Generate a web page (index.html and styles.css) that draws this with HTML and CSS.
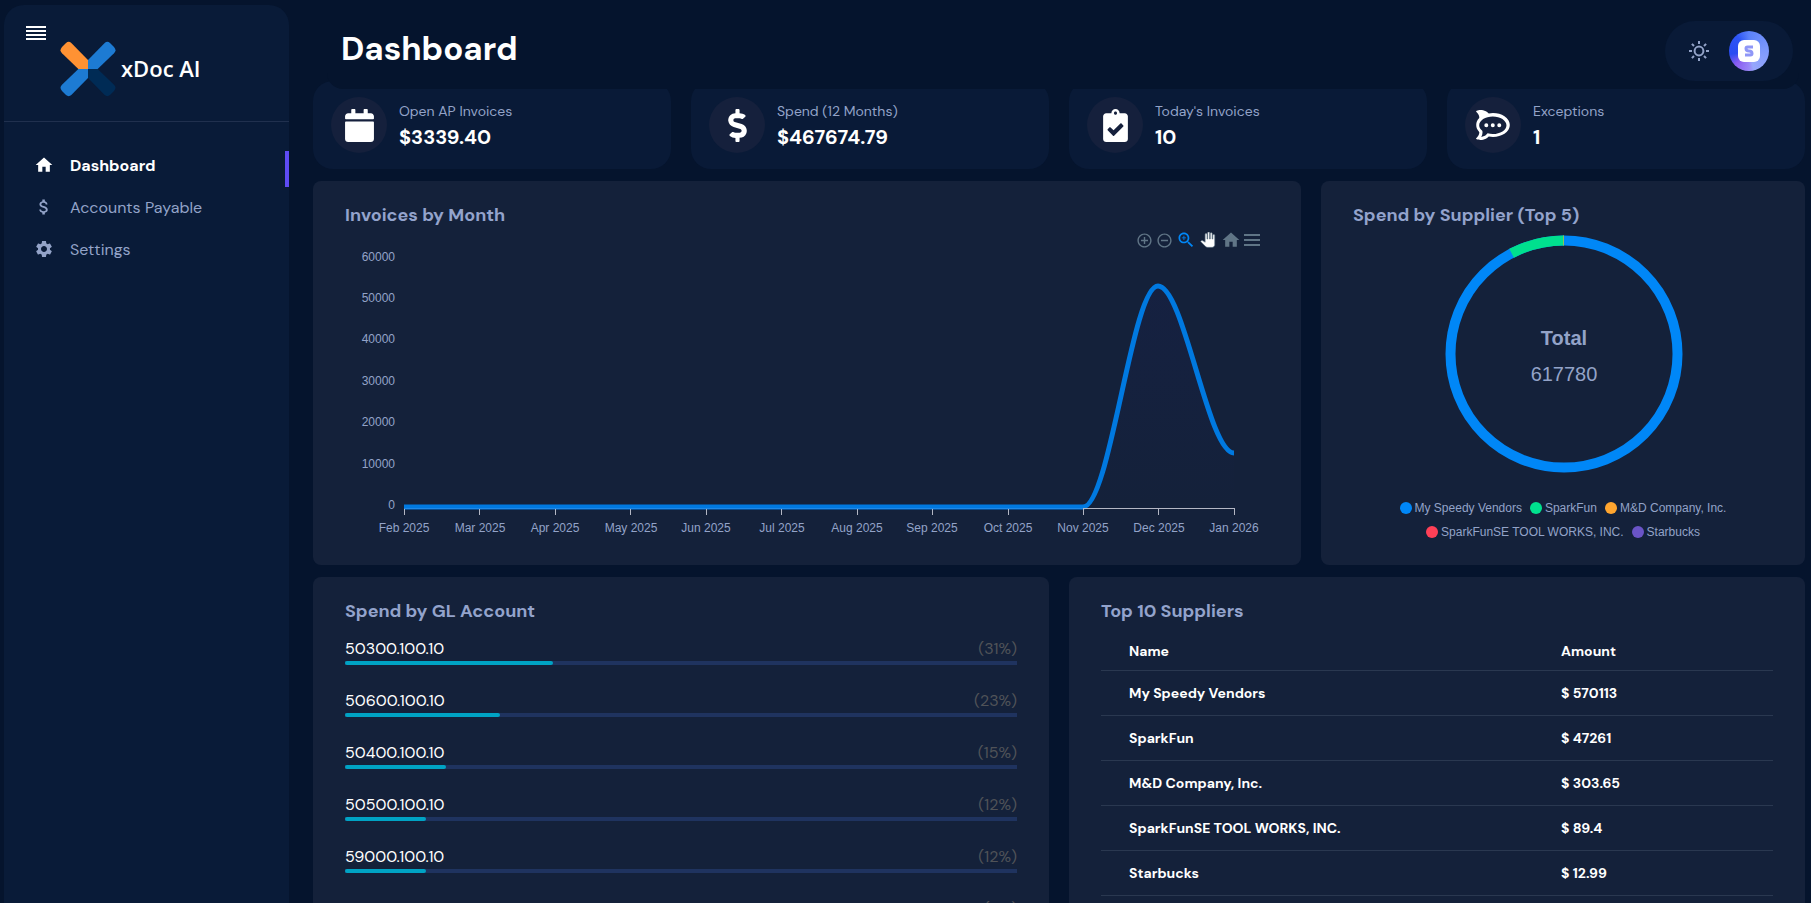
FILE: index.html
```html
<!DOCTYPE html>
<html lang="en">
<head>
  <meta charset="UTF-8">
  <meta name="viewport" content="width=device-width, initial-scale=1">
  <title>xDoc AI - Dashboard</title>
  <link rel="stylesheet" href="styles.css">
</head>
<body>
  <div class="app">

    <aside class="sidebar">
      <div class="brand">
        <button type="button" class="menu-toggle" aria-label="Toggle menu">
          <span></span><span></span><span></span><span></span>
        </button>
        <a href="#" class="logo">
          <svg width="56" height="56" viewBox="181 122 168 168" aria-hidden="true">
            <path fill="#ff9233" d="M187 140 199 128Q207 121 215 128L265 179V206H236L187 159Q178 150 187 140Z"/>
            <path fill="#1d7bd3" d="M343 140 331 128Q323 121 315 128L265 179V206H294L343 159Q352 150 343 140Z"/>
            <path fill="#1d7bd3" d="M187 272 199 284Q207 291 215 284L265 233V206H236L187 253Q178 262 187 272Z"/>
            <path fill="#002b55" d="M343 272 331 284Q323 291 315 284L265 233V206H294L343 253Q352 262 343 272Z"/>
          </svg>
          <span>xDoc AI</span>
        </a>
      </div>
      <nav class="nav">
        <a href="#" class="nav-link active">
          <svg width="20" height="20" viewBox="0 0 24 24"><path d="M10 20v-6h4v6h5v-8h3L12 3 2 12h3v8z"/></svg>
          Dashboard
        </a>
        <a href="#" class="nav-link">
          <svg width="20" height="20" viewBox="0 0 24 24"><path d="M11.8 10.9c-2.27-.59-3-1.2-3-2.15 0-1.09 1.01-1.85 2.7-1.85 1.78 0 2.44.85 2.5 2.1h2.21c-.07-1.72-1.12-3.3-3.21-3.81V3h-3v2.16c-1.94.42-3.5 1.68-3.5 3.61 0 2.31 1.91 3.46 4.7 4.13 2.5.6 3 1.48 3 2.41 0 .69-.49 1.79-2.7 1.79-2.06 0-2.87-.92-2.98-2.1h-2.2c.12 2.19 1.76 3.42 3.68 3.83V21h3v-2.15c1.95-.37 3.5-1.5 3.5-3.55 0-2.84-2.43-3.81-4.7-4.4z"/></svg>
          Accounts Payable
        </a>
        <a href="#" class="nav-link">
          <svg width="20" height="20" viewBox="0 0 24 24"><path d="M19.14 12.94c.04-.3.06-.61.06-.94 0-.32-.02-.64-.07-.94l2.03-1.58c.18-.14.23-.41.12-.61l-1.92-3.32c-.12-.22-.37-.29-.59-.22l-2.39.96c-.5-.38-1.03-.7-1.62-.94l-.36-2.54c-.04-.24-.24-.41-.48-.41h-3.84c-.24 0-.43.17-.47.41l-.36 2.54c-.59.24-1.13.57-1.62.94l-2.39-.96c-.22-.08-.47 0-.59.22L2.74 8.87c-.12.21-.08.47.12.61l2.03 1.58c-.05.3-.09.63-.09.94s.02.64.07.94l-2.03 1.58c-.18.14-.23.41-.12.61l1.92 3.32c.12.22.37.29.59.22l2.39-.96c.5.38 1.03.7 1.62.94l.36 2.54c.05.24.24.41.48.41h3.84c.24 0 .44-.17.47-.41l.36-2.54c.59-.24 1.13-.56 1.62-.94l2.39.96c.22.08.47 0 .59-.22l1.92-3.32c.12-.22.07-.47-.12-.61l-2.01-1.58zM12 15.6c-1.98 0-3.6-1.62-3.6-3.6s1.62-3.6 3.6-3.6 3.6 1.62 3.6 3.6-1.62 3.6-3.6 3.6z"/></svg>
          Settings
        </a>
      </nav>
    </aside>

    <main class="main">
      <header class="topbar">
        <h1>Dashboard</h1>
        <div class="topbar-actions">
          <button type="button" class="icon-btn" aria-label="Switch theme">
            <svg width="20" height="20" viewBox="0 0 20 20">
              <circle cx="10" cy="10" r="4.4"/>
              <path d="M10 0v3M10 17v3M0 10h3M17 10h3M2.9 2.9l2.1 2.1M15 15l2.1 2.1M2.9 17.1 5 15M15 5l2.1-2.1"/>
            </svg>
          </button>
          <button type="button" class="avatar" aria-label="Account">
            <svg width="22" height="22" viewBox="0 0 22 22">
              <rect width="22" height="22" rx="6" fill="#fff"/>
              <path fill="none" d="M15 7H9.500Q8 7 8 8.500 8 11 11 11T14 13.500Q14 15 12.500 15H7" stroke="#8f97f7" stroke-width="3"/>
            </svg>
          </button>
        </div>
      </header>

      <section class="stats">
        <div class="stat">
          <div class="stat-icon">
            <svg width="29" height="33" viewBox="0 0 448 512"><path d="M12 192h424c6.600 0 12 5.400 12 12v260c0 26.500-21.500 48-48 48H48c-26.500 0-48-21.500-48-48V204c0-6.600 5.400-12 12-12zm436-44v-36c0-26.500-21.500-48-48-48h-48V12c0-6.600-5.400-12-12-12h-40c-6.600 0-12 5.400-12 12v52H160V12c0-6.600-5.400-12-12-12h-40c-6.600 0-12 5.400-12 12v52H48C21.500 64 0 85.500 0 112v36c0 6.600 5.400 12 12 12h424c6.600 0 12-5.400 12-12z"/></svg>
          </div>
          <div>
            <div class="stat-label">Open AP Invoices</div>
            <div class="stat-value">$3339.40</div>
          </div>
        </div>
        <div class="stat">
          <div class="stat-icon">
            <svg width="19" height="33" viewBox="0 0 288 512"><path d="M209.200 233.400l-108-31.600C88.700 198.200 80 186.500 80 173.500c0-16.300 13.200-29.500 29.500-29.500h66.300c12.200 0 24.200 3.700 34.200 10.500 6.100 4.100 14.300 3.100 19.500-2l34.800-34c7.100-6.900 6.100-18.400-1.800-24.500C238 74.800 207.400 64.100 176 64V16c0-8.800-7.200-16-16-16h-32c-8.800 0-16 7.200-16 16v48h-2.500C45.800 64-5.400 118.700.5 183.600c4.200 46.100 39.400 83.600 83.800 96.600l102.500 30c12.500 3.700 21.200 15.300 21.200 28.300 0 16.300-13.200 29.500-29.500 29.500h-66.300C100 368 88 364.300 78 357.500c-6.100-4.100-14.300-3.100-19.500 2l-34.800 34c-7.100 6.900-6.100 18.400 1.800 24.500 24.500 19.200 55.100 29.900 86.500 30v48c0 8.800 7.200 16 16 16h32c8.800 0 16-7.200 16-16v-48.200c46.600-.9 90.300-28.600 105.700-72.700 21.500-61.600-14.600-124.800-72.500-141.700z"/></svg>
          </div>
          <div>
            <div class="stat-label">Spend (12 Months)</div>
            <div class="stat-value">$467674.79</div>
          </div>
        </div>
        <div class="stat">
          <div class="stat-icon">
            <svg width="25" height="33" viewBox="0 0 384 512"><path d="M336 64h-80c0-35.300-28.700-64-64-64s-64 28.700-64 64H48C21.500 64 0 85.500 0 112v352c0 26.500 21.500 48 48 48h288c26.500 0 48-21.500 48-48V112c0-26.500-21.500-48-48-48zM192 40c13.300 0 24 10.700 24 24s-10.700 24-24 24-24-10.700-24-24 10.700-24 24-24zm121.200 231.800l-143 141.800c-4.700 4.700-12.300 4.600-17-.1l-82.600-83.300c-4.700-4.700-4.600-12.300.1-17L99.100 285c4.700-4.700 12.300-4.600 17 .1l46 46.400 106-105.200c4.700-4.700 12.300-4.600 17 .1l28.200 28.400c4.700 4.800 4.600 12.300-.1 17z"/></svg>
          </div>
          <div>
            <div class="stat-label">Today's Invoices</div>
            <div class="stat-value">10</div>
          </div>
        </div>
        <div class="stat">
          <div class="stat-icon">
            <svg width="34" height="30" viewBox="0 0 576 512"><path d="M284.046,224.8a34.114,34.114,0,1,0,34.317,34.113A34.217,34.217,0,0,0,284.046,224.8Zm-110.45,0a34.114,34.114,0,1,0,34.317,34.113A34.217,34.217,0,0,0,173.6,224.8Zm220.923,0a34.114,34.114,0,1,0,34.317,34.113A34.215,34.215,0,0,0,394.519,224.8Zm153.807-55.319c-15.535-24.172-37.31-45.57-64.681-63.618-52.886-34.817-122.374-54-195.666-54a405.975,405.975,0,0,0-72.032,6.357,238.524,238.524,0,0,0-49.51-36.588C99.684-11.7,40.859.711,11.135,11.421A14.291,14.291,0,0,0,5.58,34.782C26.542,56.458,61.222,99.3,52.7,138.252c-33.142,33.9-51.112,74.776-51.112,117.337,0,43.372,17.97,84.248,51.112,118.148,8.526,38.956-26.154,81.816-47.116,103.491a14.284,14.284,0,0,0,5.555,23.34c29.724,10.709,88.549,23.147,155.324-10.2a238.679,238.679,0,0,0,49.51-36.589A405.972,405.972,0,0,0,288,460.14c73.313,0,142.8-19.159,195.667-53.975,27.371-18.049,49.145-39.426,64.679-63.619,17.309-26.923,26.07-55.916,26.07-86.125C574.394,225.4,565.634,196.43,548.326,169.485ZM284.987,409.9a345.65,345.65,0,0,1-89.446-11.5l-20.129,19.393a184.366,184.366,0,0,1-37.138,27.585,145.767,145.767,0,0,1-52.522,14.87c.983-1.771,1.881-3.563,2.842-5.356q30.258-55.68,16.325-100.078c-32.992-25.962-52.778-59.2-52.778-95.4,0-83.1,104.254-150.469,232.846-150.469s232.867,67.373,232.867,150.469C517.854,342.525,413.6,409.9,284.987,409.9Z"/></svg>
          </div>
          <div>
            <div class="stat-label">Exceptions</div>
            <div class="stat-value">1</div>
          </div>
        </div>
      </section>

      <section class="charts">
        <div class="card card-wide">
          <h2>Invoices by Month</h2>
          <div class="toolbar">
            <button type="button" aria-label="Zoom in"><svg width="17" height="17" viewBox="0 0 24 24"><path d="M13 7h-2v4H7v2h4v4h2v-4h4v-2h-4V7zm-1-5C6.480 2 2 6.480 2 12s4.480 10 10 10 10-4.480 10-10S17.520 2 12 2zm0 18c-4.410 0-8-3.590-8-8s3.590-8 8-8 8 3.590 8 8-3.590 8-8 8z"/></svg></button>
            <button type="button" aria-label="Zoom out"><svg width="17" height="17" viewBox="0 0 24 24"><path d="M7 11v2h10v-2H7zm5-9C6.480 2 2 6.480 2 12s4.480 10 10 10 10-4.480 10-10S17.520 2 12 2zm0 18c-4.410 0-8-3.590-8-8s3.590-8 8-8 8 3.590 8 8-3.590 8-8 8z"/></svg></button>
            <button type="button" class="selected" aria-label="Selection zoom"><svg width="20" height="20" viewBox="0 0 24 24"><path d="M15.500 14h-.79l-.28-.27C15.410 12.590 16 11.110 16 9.500 16 5.910 13.090 3 9.500 3S3 5.910 3 9.500 5.910 16 9.500 16c1.610 0 3.090-.59 4.230-1.570l.27.28v.79l5 4.990L20.490 19l-4.990-5zm-6 0C7.010 14 5 11.990 5 9.500S7.010 5 9.500 5 14 7.010 14 9.500 11.990 14 9.500 14z"/><path d="M12 10h-2v2H9v-2H7V9h2V7h1v2h2v1z"/></svg></button>
            <button type="button" class="pan" aria-label="Panning"><svg width="16" height="16" viewBox="0 0 25 25"><path d="M23 5.500V20c0 2.200-1.800 4-4 4h-7.300c-1.080 0-2.100-.43-2.850-1.190L1 14.830s1.260-1.230 1.300-1.250c.22-.19.49-.29.79-.29.22 0 .42.06.6.16.04.01 4.310 2.460 4.310 2.460V4c0-.83.67-1.500 1.500-1.500S11 3.170 11 4v7h1V1.500c0-.83.67-1.500 1.500-1.500S15 .67 15 1.500V11h1V2.500c0-.83.67-1.500 1.500-1.500s1.500.67 1.500 1.500V11h1V5.500c0-.83.67-1.500 1.500-1.500s1.500.67 1.500 1.500z"/></svg></button>
            <button type="button" aria-label="Reset zoom"><svg width="20" height="20" viewBox="0 0 24 24"><path d="M10 20v-6h4v6h5v-8h3L12 3 2 12h3v8z"/></svg></button>
            <button type="button" aria-label="Chart menu"><svg width="16" height="12" viewBox="0 0 16 12"><path d="M0 0h16v2H0zM0 5h16v2H0zM0 10h16v2H0z"/></svg></button>
          </div>
          <svg class="line-chart" viewBox="0 0 924 292" role="img" aria-label="Invoices by month">
            <defs>
              <linearGradient id="area" x1="0" y1="0" x2="0" y2="1">
                <stop offset="0" stop-color="#2a1fa0" stop-opacity=".07"/>
                <stop offset="1" stop-color="#2a1fa0" stop-opacity="0"/>
              </linearGradient>
            </defs>
            <g class="axis-text" text-anchor="end">
              <text x="50" y="12">60000</text>
              <text x="50" y="53">50000</text>
              <text x="50" y="94">40000</text>
              <text x="50" y="136">30000</text>
              <text x="50" y="177">20000</text>
              <text x="50" y="219">10000</text>
              <text x="50" y="260">0</text>
            </g>
            <path fill="url(#area)" d="M738 258C765 258 787 37 813 37S863 204 889 204V258Z"/>
            <path fill="none" stroke="#0079e0" stroke-width="5" d="M59 258H738C765 258 787 37 813 37S863 204 889 204"/>
            <path class="axis-line" d="M59 259.500H889M59.500 259v7M134.500 259v7M210.500 259v7M285.500 259v7M361.500 259v7M436.500 259v7M512.500 259v7M587.500 259v7M663.500 259v7M738.500 259v7M813.500 259v7M889.500 259v7"/>
            <path stroke="#1f88e8" d="M59 259.500H738"/>
            <g class="axis-text" text-anchor="middle">
              <text x="59" y="283">Feb 2025</text>
              <text x="135" y="283">Mar 2025</text>
              <text x="210" y="283">Apr 2025</text>
              <text x="286" y="283">May 2025</text>
              <text x="361" y="283">Jun 2025</text>
              <text x="437" y="283">Jul 2025</text>
              <text x="512" y="283">Aug 2025</text>
              <text x="587" y="283">Sep 2025</text>
              <text x="663" y="283">Oct 2025</text>
              <text x="738" y="283">Nov 2025</text>
              <text x="814" y="283">Dec 2025</text>
              <text x="889" y="283">Jan 2026</text>
            </g>
          </svg>
        </div>

        <div class="card">
          <h2>Spend by Supplier (Top 5)</h2>
          <svg class="donut" viewBox="0 0 420 271" role="img" aria-label="Spend by supplier">
            <g fill="none" stroke-width="10">
              <circle cx="211" cy="129" r="113.500" stroke="#0087f7"/>
              <path stroke="#00e08e" d="M158.600 28.300A113.500 113.500 0 0 1 211 15.500"/>
              <path stroke="#8fc05a" stroke-width="1" d="M210.500 10.500V20.500"/>
            </g>
            <text class="donut-title" x="211" y="120">Total</text>
            <text class="donut-value" x="211" y="156">617780</text>
          </svg>
          <ul class="legend">
            <li><span class="dot blue"></span>My Speedy Vendors</li>
            <li><span class="dot green"></span>SparkFun</li>
            <li><span class="dot orange"></span>M&amp;D Company, Inc.</li>
            <li><span class="dot red"></span>SparkFunSE TOOL WORKS, INC.</li>
            <li><span class="dot purple"></span>Starbucks</li>
          </ul>
        </div>
      </section>

      <section class="details">
        <div class="card">
          <h2>Spend by GL Account</h2>
          <ul class="accounts">
            <li>
              <div class="account-row"><span>50300.100.10</span><span class="percent">(31%)</span></div>
              <div class="bar"><div class="bar-fill" style="width: 31%"></div></div>
            </li>
            <li>
              <div class="account-row"><span>50600.100.10</span><span class="percent">(23%)</span></div>
              <div class="bar"><div class="bar-fill" style="width: 23%"></div></div>
            </li>
            <li>
              <div class="account-row"><span>50400.100.10</span><span class="percent">(15%)</span></div>
              <div class="bar"><div class="bar-fill" style="width: 15%"></div></div>
            </li>
            <li>
              <div class="account-row"><span>50500.100.10</span><span class="percent">(12%)</span></div>
              <div class="bar"><div class="bar-fill" style="width: 12%"></div></div>
            </li>
            <li>
              <div class="account-row"><span>59000.100.10</span><span class="percent">(12%)</span></div>
              <div class="bar"><div class="bar-fill" style="width: 12%"></div></div>
            </li>
            <li>
              <div class="account-row"><span>50200.100.10</span><span class="percent">(7%)</span></div>
              <div class="bar"><div class="bar-fill" style="width: 7%"></div></div>
            </li>
          </ul>
        </div>

        <div class="card">
          <h2>Top 10 Suppliers</h2>
          <table class="suppliers">
            <thead>
              <tr><th>Name</th><th>Amount</th></tr>
            </thead>
            <tbody>
              <tr><td>My Speedy Vendors</td><td>$ 570113</td></tr>
              <tr><td>SparkFun</td><td>$ 47261</td></tr>
              <tr><td>M&amp;D Company, Inc.</td><td>$ 303.65</td></tr>
              <tr><td>SparkFunSE TOOL WORKS, INC.</td><td>$ 89.4</td></tr>
              <tr><td>Starbucks</td><td>$ 12.99</td></tr>
            </tbody>
          </table>
        </div>
      </section>
    </main>

  </div>
</body>
</html>
```
FILE: styles.css
```css
* { box-sizing: border-box; }

body {
  margin: 0;
  background: #05142d;
  color: #fff;
  font-family: "DM Sans", Inter, sans-serif;
  font-size: 16px;
}

h1, h2, ul { margin: 0; padding: 0; }
ul { list-style: none; }
a { color: inherit; text-decoration: none; }
svg { display: block; fill: currentColor; }
button { padding: 0; border: 0; background: none; color: inherit; cursor: pointer; }

.app {
  display: flex;
  align-items: flex-start;
  gap: 24px;
  padding: 0 6px 0 4px;
}

/* sidebar */
.sidebar {
  position: sticky;
  top: 5px;
  flex: 0 0 285px;
  height: calc(100vh - 5px);
  margin-top: 5px;
  background: #091b38;
  border-radius: 20px 20px 0 0;
}
.brand {
  display: flex;
  align-items: flex-start;
  gap: 14px;
  height: 117px;
  padding: 21px 22px;
  border-bottom: 1px solid #20304e;
}
.menu-toggle {
  display: flex;
  flex-direction: column;
  gap: 2px;
  width: 20px;
}
.menu-toggle span { height: 2px; background: #fff; }
.logo {
  display: flex;
  align-items: center;
  gap: 5px;
  margin-top: 15px;
  font-family: "Open Sans", "Noto Sans", sans-serif;
  font-size: 22px;
  line-height: 28px;
  font-weight: 600;
}
.logo span { padding-bottom: 2px; }
.nav { padding-top: 29px; }
.nav-link {
  display: flex;
  align-items: center;
  gap: 16px;
  height: 36px;
  margin-bottom: 6px;
  padding: 0 0 8px 30px;
  color: #93a3c8;
}
.nav-link.active {
  color: #fff;
  font-weight: 700;
  background: linear-gradient(#5e4bf5, #5e4bf5) right / 4px 100% no-repeat;
}

/* top bar, slightly over the stat cards */
.main { flex: 1; min-width: 0; padding-bottom: 24px; }
.topbar {
  position: relative;
  z-index: 1;
  display: flex;
  justify-content: space-between;
  align-items: center;
  margin: 0 6px 0 14px;
  padding: 21px 6px 8px 14px;
  background: #05142d;
  border-radius: 0 0 16px 16px;
}
.topbar h1 {
  padding-bottom: 4px;
  font-size: 33px;
  line-height: 40px;
  font-weight: 700;
}
.topbar-actions {
  display: flex;
  align-items: center;
  gap: 20px;
  padding: 10px 24px;
  border-radius: 30px;
  background: #091a37;
}
.icon-btn svg { fill: none; stroke: #93a3c8; stroke-width: 2; }
.avatar {
  display: grid;
  place-items: center;
  width: 40px;
  height: 40px;
  border-radius: 50%;
  background: conic-gradient(#5b82fa, #7f9afb 90deg, #97a7fc 165deg, #9a86f8 180deg, #8a5cf0 225deg, #2a4cf2 260deg, #2d55f5 320deg, #5b82fa);
}

/* stat cards */
.stats {
  display: grid;
  grid-template-columns: repeat(4, 1fr);
  gap: 20px;
  margin-top: -8px;
}
.stat {
  display: flex;
  align-items: center;
  gap: 12px;
  height: 88px;
  padding: 0 18px;
  background: #091a37;
  border-radius: 20px;
}
.stat-icon {
  display: grid;
  place-items: center;
  width: 56px;
  height: 56px;
  border-radius: 50%;
  background: #15203c;
}
.stat-label { color: #93a3c8; font-size: 14px; line-height: 24px; }
.stat-value { font-size: 20px; line-height: 28px; font-weight: 700; }

/* cards */
.charts, .details { display: grid; gap: 20px; margin-top: 12px; }
.charts { grid-template-columns: repeat(3, 1fr); }
.details { grid-template-columns: repeat(2, 1fr); }
.card {
  padding: 24px 32px 21px;
  background: #14213a;
  border-radius: 8px;
}
.card-wide { grid-column: span 2; }
.card h2 {
  color: #93a3cc;
  font-size: 18px;
  line-height: 20px;
  font-weight: 700;
}

/* line chart */
.toolbar {
  display: flex;
  justify-content: flex-end;
  align-items: center;
  gap: 3px;
  height: 18px;
  margin-top: 6px;
  padding-right: 9px;
  color: #607586;
}
.toolbar .selected { color: #0087f7; }
.toolbar .pan { padding: 0 2px 0 1px; }
.toolbar .pan path { fill: #fefefe; stroke: #607586; }
.line-chart, .donut { width: 100%; height: auto; }
.line-chart { overflow: visible; }
.axis-text, .legend { font-family: "Liberation Sans", Helvetica, sans-serif; font-size: 12px; }
.axis-text { fill: #93a3c8; }
.axis-line { fill: none; stroke: #b4b7c4; }

/* donut */
.donut text {
  fill: #93a3c8;
  font-family: "Liberation Sans", Helvetica, sans-serif;
  font-size: 20px;
  text-anchor: middle;
}
.donut .donut-title { font-weight: 700; }
.legend {
  display: flex;
  flex-wrap: wrap;
  justify-content: center;
  column-gap: 8px;
  color: #93a3c8;
  line-height: 24px;
}
.legend li { display: flex; align-items: center; gap: 3px; }
.dot { width: 12px; height: 12px; border-radius: 50%; }
.blue { background: #0087f7; }
.green { background: #00e08e; }
.orange { background: #ffa52f; }
.red { background: #ff4057; }
.purple { background: #6a54c6; }

/* GL accounts */
.accounts { display: grid; gap: 24px; margin-top: 16px; }
.account-row { display: flex; justify-content: space-between; line-height: 24px; }
.percent { color: #505358; }
.bar { height: 4px; background: #1f335f; }
.bar-fill { height: 4px; border-radius: 2px; background: #00a3c4; }

/* suppliers */
.suppliers {
  width: 100%;
  margin-top: 12px;
  border-collapse: collapse;
  font-size: 14px;
}
.suppliers th, .suppliers td {
  height: 45px;
  padding: 0 28px;
  border-bottom: 1px solid #2a3850;
  text-align: left;
  font-weight: 700;
}
.suppliers th { height: 37px; }
.suppliers th:last-child { width: 240px; }
```
